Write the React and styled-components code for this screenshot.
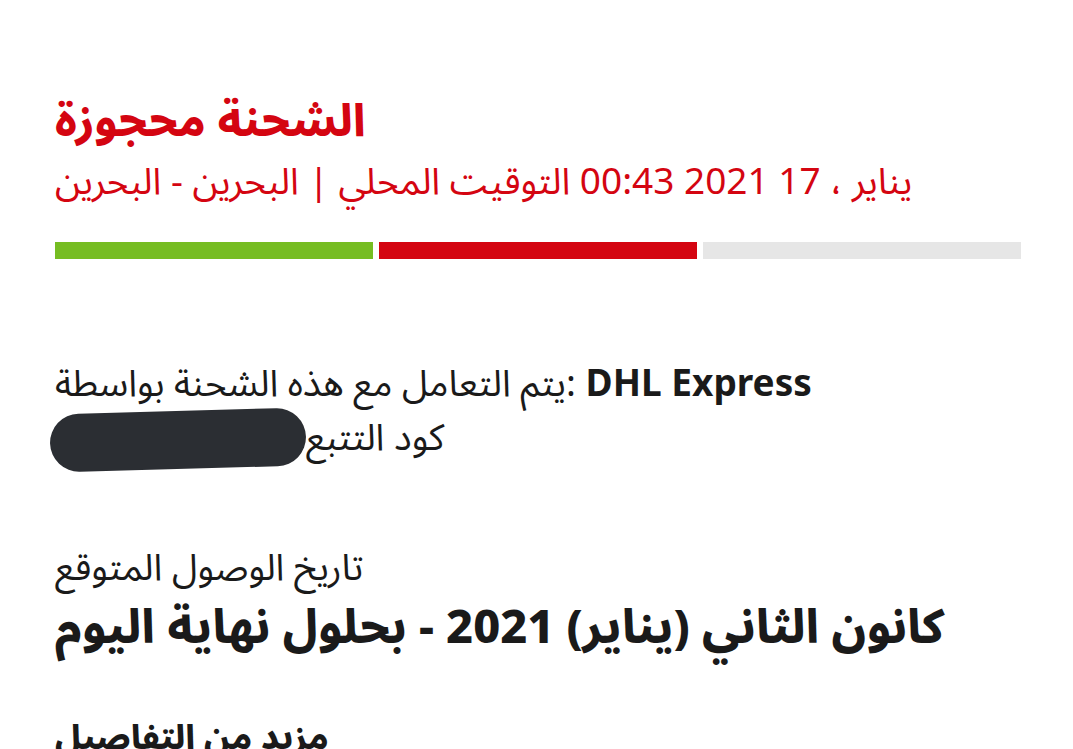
import React from "react";
import styled, { createGlobalStyle } from "styled-components";

const Global = createGlobalStyle`
  html, body { margin: 0; padding: 0; background: #fff; }
  body { font-family: "Noto Sans Arabic", "Noto Sans", "DejaVu Sans", sans-serif; }
`;

const Page = styled.main`
  padding: 92px 52px 0 55px;
  height: 749px;
  box-sizing: border-box;
  overflow: hidden;
  display: flex;
  flex-direction: column;
`;

const Title = styled.h1`
  margin: 0;
  font-size: 44.5px;
  line-height: 60px;
  font-weight: 800;
  color: #d40511;
`;

const Sub = styled.p`
  margin: 0;
  font-size: 37px;
  line-height: 60px;
  color: #d40511;
`;

const Progress = styled.div`
  display: grid;
  grid-template-columns: repeat(3, 1fr);
  gap: 6px;
  margin-top: 30px;
`;

const Segment = styled.div`
  height: 17px;
  background: ${(p) => p.$color};
`;

const Body = styled.p`
  margin: ${(p) => p.$mt || 0}px 0 0;
  font-size: 37px;
  line-height: 54px;
  color: #1a1a1a;
  text-align: left;
  direction: ${(p) => (p.$rtl ? "rtl" : "ltr")};
`;

const Brand = styled.b`
  font-family: "Noto Sans", "Open Sans", sans-serif;
  font-weight: 700;
`;

const Redacted = styled.span`
  display: inline-block;
  width: 256px;
  height: 58px;
  margin-left: -5px;
  vertical-align: middle;
  background: #2b2e33;
  border-radius: 29px;
  transform: rotate(-1.6deg);
  color: transparent;
  overflow: hidden;
`;

const Big = styled.h2`
  margin: 0;
  font-size: 46.8px;
  line-height: 68px;
  font-weight: 800;
  color: #1a1a1a;
`;

const More = styled.h3`
  margin: 48px 0 0;
  font-size: 34px;
  line-height: 54px;
  font-weight: 800;
  color: #1a1a1a;
`;

export default function App() {
  return (
    <>
      <Global />
      <Page>
        <Title>الشحنة محجوزة</Title>
        <Sub>يناير ، 17 2021 00:43 التوقيت المحلي | البحرين - البحرين</Sub>
        <Progress>
          <Segment $color="#76bd22" />
          <Segment $color="#d40511" />
          <Segment $color="#e6e6e6" />
        </Progress>
        <Body $mt={96}>
          يتم التعامل مع هذه الشحنة بواسطة: <Brand>DHL Express</Brand>
        </Body>
        <Body $rtl>
          كود التتبع<Redacted>1234567890</Redacted>
        </Body>
        <Body $mt={72}>تاريخ الوصول المتوقع</Body>
        <Big>كانون الثاني (يناير) 2021 - بحلول نهاية اليوم</Big>
        <More>مزيد من التفاصيل</More>
      </Page>
    </>
  );
}
